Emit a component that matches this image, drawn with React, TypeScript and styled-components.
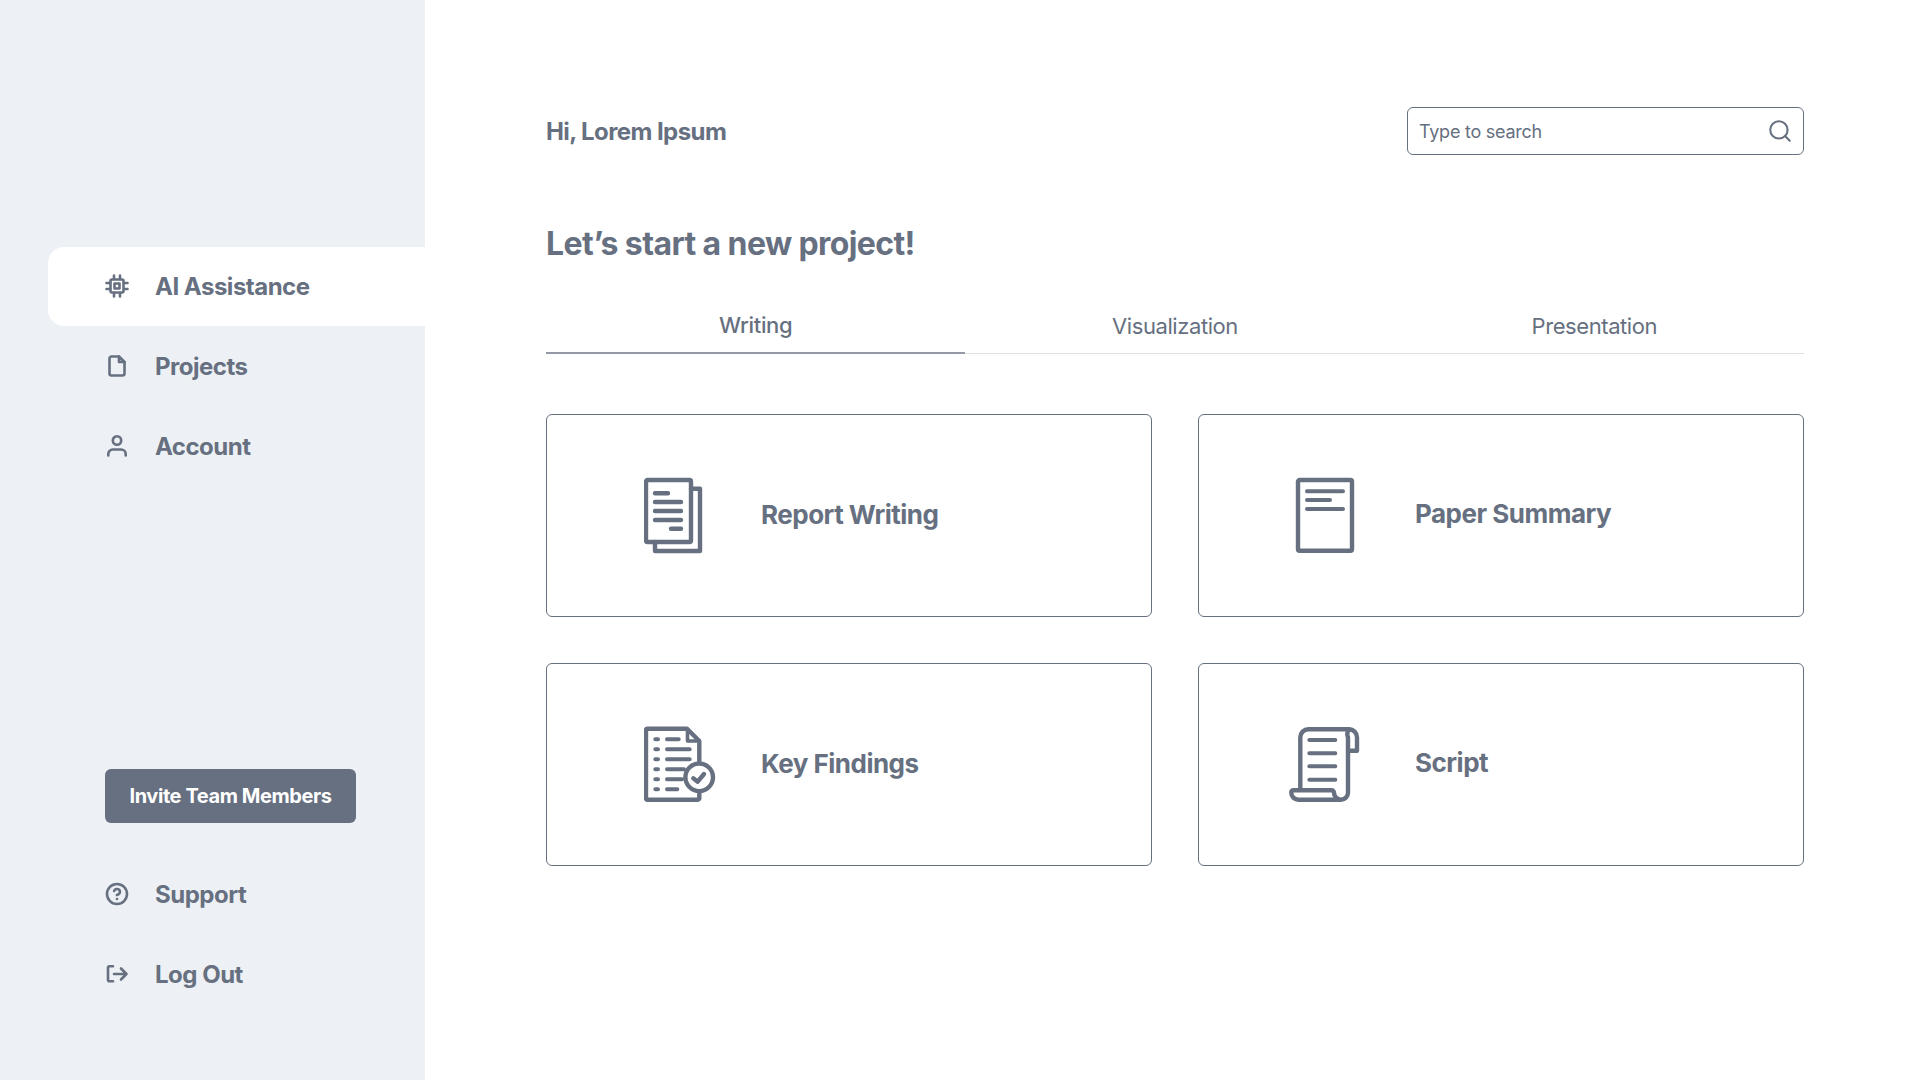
import React from "react";
import styled, { createGlobalStyle } from "styled-components";
import { CircleHelp, Search } from "lucide-react";

const INK = "#667080";

const Global = createGlobalStyle`
  html, body { margin: 0; padding: 0; background: #fff; }
  body { font-family: Inter, "Liberation Sans", sans-serif; color: ${INK}; }
  * { box-sizing: border-box; }
`;

const Page = styled.div`
  display: flex;
  height: 100vh;
  overflow: hidden;
`;

const Sidebar = styled.aside`
  width: 425px;
  flex: none;
  background: #edf0f4;
  padding: 247px 0 65px 48px;
  display: flex;
  flex-direction: column;
`;

const NavList = styled.nav`
  display: flex;
  flex-direction: column;
`;

const NavItem = styled.a<{ $active?: boolean }>`
  display: flex;
  align-items: center;
  gap: 26px;
  height: ${(p) => (p.$active ? 79 : 80)}px;
  margin-bottom: ${(p) => (p.$active ? 1 : 0)}px;
  padding: 0 0 ${(p) => (p.$active ? 1 : 2)}px 57px;
  font-size: 24px;
  font-weight: 700;
  letter-spacing: -0.5px;
  color: ${INK};
  background: ${(p) => (p.$active ? "#fff" : "transparent")};
  border-radius: 16px 0 0 16px;
  svg { flex: none; width: 24px; height: 24px; stroke-width: 2.6; }
`;

const BottomGroup = styled.div`
  margin-top: auto;
  display: flex;
  flex-direction: column;
`;

const InviteButton = styled.button`
  margin: 0 0 32px 57px;
  width: 251px;
  height: 54px;
  border: 0;
  border-radius: 6px;
  background: ${INK};
  color: #fff;
  font: 700 20px Inter, "Liberation Sans", sans-serif;
  letter-spacing: -0.42px;
`;

const Main = styled.main`
  flex: 1;
  min-width: 0;
  padding: 107px 116px 0 121px;
`;

const Header = styled.header`
  display: flex;
  align-items: center;
  justify-content: space-between;
  height: 48px;
`;

const Greeting = styled.div`
  font-size: 24px;
  font-weight: 700;
  letter-spacing: -0.58px;
`;

const SearchBox = styled.label`
  width: 397px;
  height: 48px;
  border: 1px solid ${INK};
  border-radius: 6px;
  display: flex;
  align-items: center;
  justify-content: space-between;
  padding: 0 10px 0 11px;
  font-size: 18px;
  letter-spacing: -0.25px;
  color: ${INK};
  svg { width: 26px; height: 26px; stroke-width: 1.9; }
`;

const Title = styled.h1`
  margin: 69px 0 0;
  font-size: 32px;
  line-height: 39px;
  font-weight: 700;
  letter-spacing: -0.6px;
`;

const Tabs = styled.div`
  margin-top: 34px;
  display: grid;
  grid-template-columns: repeat(3, 1fr);
  border-bottom: 1px solid #e0e2e6;
`;

const Tab = styled.div<{ $active?: boolean }>`
  height: 57px;
  margin-bottom: -1px;
  display: flex;
  justify-content: center;
  padding-top: ${(p) => (p.$active ? 15 : 16)}px;
  font-size: 22px;
  line-height: 27px;
  font-weight: ${(p) => (p.$active ? 500 : 400)};
  letter-spacing: ${(p) => (p.$active ? -0.3 : -0.42)}px;
  border-bottom: ${(p) => (p.$active ? "2px solid #9499a5" : "0")};
`;

const CardGrid = styled.div`
  margin-top: 60px;
  display: grid;
  grid-template-columns: 606px 606px;
  grid-auto-rows: 203px;
  justify-content: space-between;
  row-gap: 46px;
`;

const Card = styled.div<{ $inset: number; $gap: number; $lift: number }>`
  border: 1px solid ${INK};
  border-radius: 6px;
  display: flex;
  align-items: center;
  gap: ${(p) => p.$gap}px;
  padding-left: ${(p) => p.$inset}px;
  span {
    font-size: 26px;
    font-weight: 700;
    letter-spacing: -0.5px;
    margin-top: ${(p) => p.$lift}px;
  }
`;

const CardIcon = styled.svg.attrs({
  viewBox: "0 0 72 80",
  fill: "none",
  stroke: INK,
  strokeWidth: 4.4,
  strokeLinecap: "round",
  strokeLinejoin: "round",
})`
  width: 72px;
  height: 80px;
  flex: none;
`;

const NavIcon = styled.svg.attrs({
  viewBox: "0 0 24 24",
  fill: "none",
  stroke: INK,
  strokeLinecap: "round",
  strokeLinejoin: "round",
})``;

const ChipIcon = () => (
  <NavIcon>
    <rect x="5.5" y="5.5" width="13" height="13" rx="1.5" />
    <rect x="9.5" y="9.5" width="5" height="5" />
    <path d="M9 1.5V5M15 1.5V5M9 19V22.5M15 19V22.5M1.5 9H5M1.5 15H5M19 9H22.5M19 15H22.5" />
  </NavIcon>
);

const FileIcon = () => (
  <NavIcon>
    <path d="M14 2.5H6.5A2 2 0 0 0 4.5 4.5V19.5A2 2 0 0 0 6.5 21.5H17.5A2 2 0 0 0 19.5 19.5V8Z" />
    <path d="M14 2.5V8H19.5" />
  </NavIcon>
);

const PersonIcon = () => (
  <NavIcon>
    <circle cx="12" cy="6.5" r="4.2" />
    <path d="M3.3 21.5V20A4.5 4.5 0 0 1 7.8 15.5H16.2A4.5 4.5 0 0 1 20.7 20V21.5" />
  </NavIcon>
);

const ExitIcon = () => (
  <NavIcon>
    <path d="M8 4.3H4.5A1.5 1.5 0 0 0 3 5.8V17.8A1.5 1.5 0 0 0 4.5 19.3H8" />
    <path d="M9 12H21.5M16 6.5L21.5 12L16 17.5" />
  </NavIcon>
);

const ReportIcon = () => (
  <CardIcon>
    <rect x="2" y="4" width="45" height="62" rx="1.5" />
    <path d="M47 12.7H56V75H11V66" />
    <path d="M11 17.3H24M11 26H37M11 35H37M11 44H37M27 52.7H37" />
  </CardIcon>
);

const PaperIcon = () => (
  <CardIcon>
    <rect x="9" y="4" width="54" height="70.7" rx="1.5" />
    <path d="M18 15.3H54M18 24H41M18 33H54" strokeWidth="4" />
  </CardIcon>
);

const FindingsIcon = () => (
  <CardIcon>
    <path d="M55.3 37V16L43 3.7H3.5A1.5 1.5 0 0 0 2 5.2V73.2A1.5 1.5 0 0 0 3.5 74.7H53.8A1.5 1.5 0 0 0 55.3 73.2V67" />
    <path d="M43.5 4V16H55" strokeWidth="3.6" />
    <circle cx="55.2" cy="52.3" r="13.8" />
    <path d="M49.3 53.3L53.7 56.7L60 49" />
    <path
      d="M11.3 14.3H14M11.3 24.3H14M11.3 34.3H14M11.3 44.3H14M11.3 54.3H14M11.3 64.3H14M23 14.3H34.7M23 24.3H45.7M23 34.3H45.7M23 44.3H40M23 54.3H38M23 64.3H33.3"
      strokeWidth="4"
    />
  </CardIcon>
);

const ScriptIcon = () => (
  <CardIcon>
    <path d="M11.3 64V12.3A8 8 0 0 1 19.3 4.3H60A8 8 0 0 1 68 12.3V25.7H59" />
    <path d="M60 4.3A8 8 0 0 0 59 12.3V67.7A7 7 0 0 1 45 67.7A2.4 2.4 0 0 0 42.6 65.3H4.3A2 2 0 0 0 2.3 67.3V67.7A7 7 0 0 0 9.3 74.7H52" />
    <path d="M20.3 15H46.3M20.3 28.3H46.3M20.3 41.3H46.3M20.3 54.7H46.3" strokeWidth="4" />
  </CardIcon>
);

export default function App() {
  return (
    <Page>
      <Global />
      <Sidebar>
        <NavList>
          <NavItem $active><ChipIcon />AI Assistance</NavItem>
          <NavItem><FileIcon />Projects</NavItem>
          <NavItem><PersonIcon />Account</NavItem>
        </NavList>
        <BottomGroup>
          <InviteButton>Invite Team Members</InviteButton>
          <NavItem><CircleHelp />Support</NavItem>
          <NavItem><ExitIcon />Log Out</NavItem>
        </BottomGroup>
      </Sidebar>
      <Main>
        <Header>
          <Greeting>Hi, Lorem Ipsum</Greeting>
          <SearchBox>
            Type to search
            <Search />
          </SearchBox>
        </Header>
        <Title>Let’s start a new project!</Title>
        <Tabs>
          <Tab $active>Writing</Tab>
          <Tab>Visualization</Tab>
          <Tab>Presentation</Tab>
        </Tabs>
        <CardGrid>
          <Card $inset={97} $gap={45} $lift={-2}><ReportIcon /><span>Report Writing</span></Card>
          <Card $inset={90} $gap={54} $lift={-4}><PaperIcon /><span>Paper Summary</span></Card>
          <Card $inset={97} $gap={45} $lift={-2}><FindingsIcon /><span>Key Findings</span></Card>
          <Card $inset={90} $gap={54} $lift={-4}><ScriptIcon /><span>Script</span></Card>
        </CardGrid>
      </Main>
    </Page>
  );
}
